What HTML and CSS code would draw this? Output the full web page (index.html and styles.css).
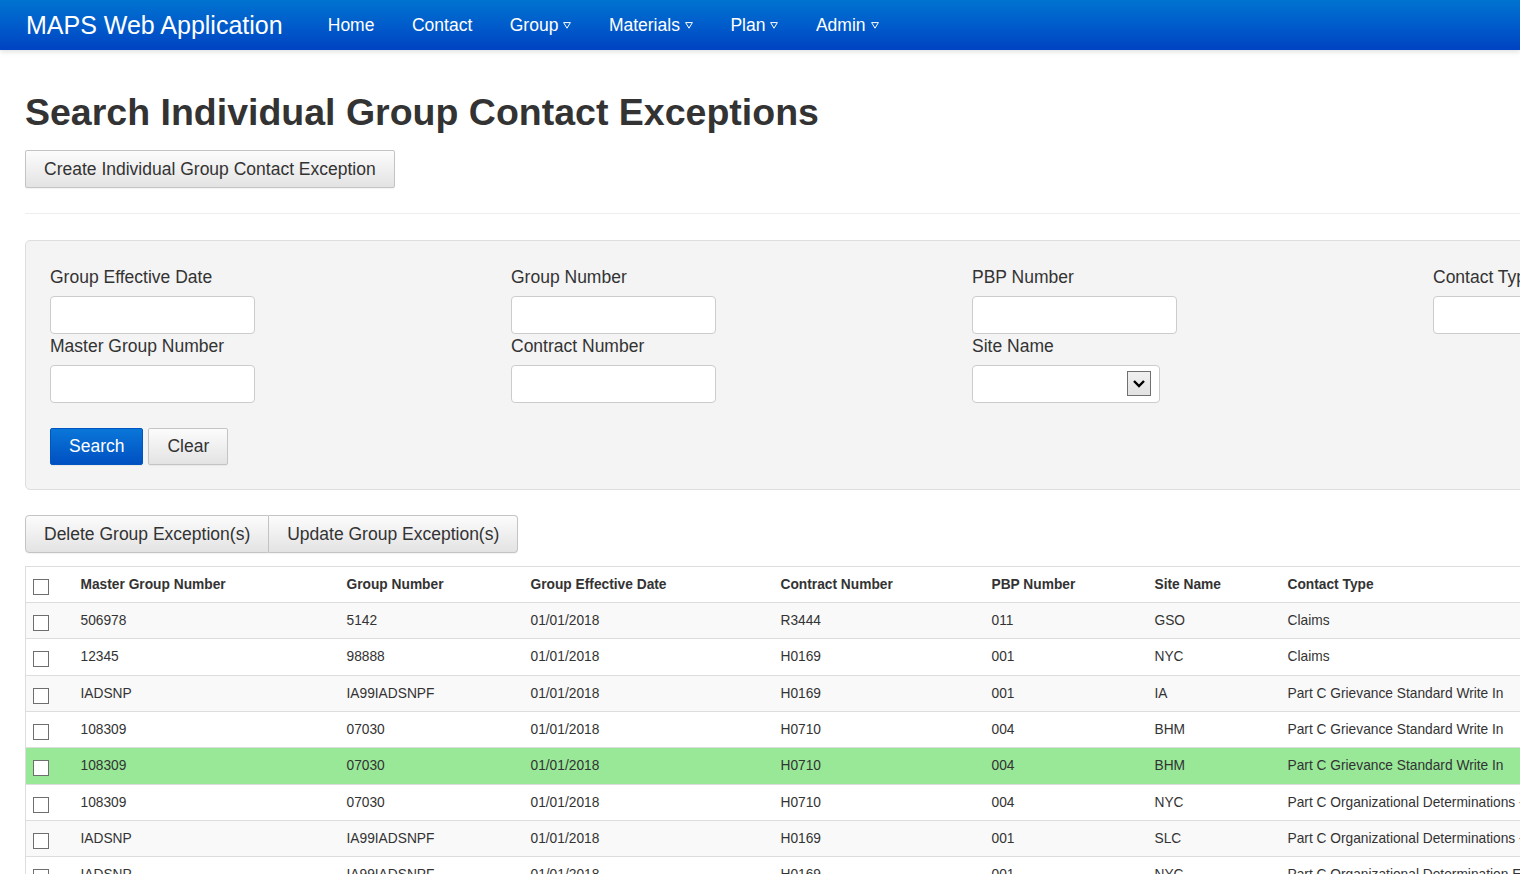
FILE: index.html
```html
<!DOCTYPE html>
<html lang="en">
<head>
<meta charset="utf-8">
<title>MAPS Web Application</title>
<link rel="stylesheet" href="styles.css">
</head>
<body>
<nav class="navbar">
  <a class="brand" href="#">MAPS Web Application</a>
  <ul class="nav">
    <li><a href="#">Home</a></li>
    <li><a href="#">Contact</a></li>
    <li><a href="#">Group<svg class="caret" width="8" height="7" viewBox="0 0 8 7"><polygon points="0.6,0.6 7.4,0.6 4,6.2" fill="none" stroke="#fff" stroke-width="1"/></svg></a></li>
    <li><a href="#">Materials<svg class="caret" width="8" height="7" viewBox="0 0 8 7"><polygon points="0.6,0.6 7.4,0.6 4,6.2" fill="none" stroke="#fff" stroke-width="1"/></svg></a></li>
    <li><a href="#">Plan<svg class="caret" width="8" height="7" viewBox="0 0 8 7"><polygon points="0.6,0.6 7.4,0.6 4,6.2" fill="none" stroke="#fff" stroke-width="1"/></svg></a></li>
    <li><a href="#">Admin<svg class="caret" width="8" height="7" viewBox="0 0 8 7"><polygon points="0.6,0.6 7.4,0.6 4,6.2" fill="none" stroke="#fff" stroke-width="1"/></svg></a></li>
  </ul>
</nav>

<main class="page">
  <h1 class="title">Search Individual Group Contact Exceptions</h1>
  <div class="create-row"><button class="btn">Create Individual Group Contact Exception</button></div>
  <hr class="divider">

  <section class="panel">
    <div class="fields">
      <div class="col">
        <label class="lbl">Group Effective Date</label>
        <input class="inp" type="text">
        <label class="lbl">Master Group Number</label>
        <input class="inp" type="text">
      </div>
      <div class="col">
        <label class="lbl">Group Number</label>
        <input class="inp" type="text">
        <label class="lbl">Contract Number</label>
        <input class="inp" type="text">
      </div>
      <div class="col">
        <label class="lbl">PBP Number</label>
        <input class="inp" type="text">
        <label class="lbl">Site Name</label>
        <div class="select">
          <span class="select-btn"><svg width="22" height="23" viewBox="0 0 22 23"><polyline points="6,9 11,14 16,9" fill="none" stroke="#000" stroke-width="2.4"/></svg></span>
        </div>
      </div>
      <div class="col">
        <label class="lbl">Contact Type</label>
        <input class="inp" type="text">
      </div>
    </div>
    <div class="search-row">
      <button class="btn btn-primary">Search</button>
      <button class="btn">Clear</button>
    </div>
  </section>

  <div class="btn-group">
    <button class="btn">Delete Group Exception(s)</button><button class="btn">Update Group Exception(s)</button>
  </div>

  <table class="grid">
    <colgroup>
      <col class="c-chk"><col class="c-mgn"><col class="c-gn"><col class="c-date"><col class="c-con"><col class="c-pbp"><col class="c-site"><col class="c-type">
    </colgroup>
    <thead>
      <tr><th><span class="chk"></span></th><th>Master Group Number</th><th>Group Number</th><th>Group Effective Date</th><th>Contract Number</th><th>PBP Number</th><th>Site Name</th><th>Contact Type</th></tr>
    </thead>
    <tbody>
      <tr><td><span class="chk"></span></td><td>506978</td><td>5142</td><td>01/01/2018</td><td>R3444</td><td>011</td><td>GSO</td><td>Claims</td></tr>
      <tr><td><span class="chk"></span></td><td>12345</td><td>98888</td><td>01/01/2018</td><td>H0169</td><td>001</td><td>NYC</td><td>Claims</td></tr>
      <tr><td><span class="chk"></span></td><td>IADSNP</td><td>IA99IADSNPF</td><td>01/01/2018</td><td>H0169</td><td>001</td><td>IA</td><td>Part C Grievance Standard Write In</td></tr>
      <tr><td><span class="chk"></span></td><td>108309</td><td>07030</td><td>01/01/2018</td><td>H0710</td><td>004</td><td>BHM</td><td>Part C Grievance Standard Write In</td></tr>
      <tr class="selected"><td><span class="chk"></span></td><td>108309</td><td>07030</td><td>01/01/2018</td><td>H0710</td><td>004</td><td>BHM</td><td>Part C Grievance Standard Write In</td></tr>
      <tr><td><span class="chk"></span></td><td>108309</td><td>07030</td><td>01/01/2018</td><td>H0710</td><td>004</td><td>NYC</td><td>Part C Organizational Determinations - Standard</td></tr>
      <tr><td><span class="chk"></span></td><td>IADSNP</td><td>IA99IADSNPF</td><td>01/01/2018</td><td>H0169</td><td>001</td><td>SLC</td><td>Part C Organizational Determinations - Standard</td></tr>
      <tr><td><span class="chk"></span></td><td>IADSNP</td><td>IA99IADSNPF</td><td>01/01/2018</td><td>H0169</td><td>001</td><td>NYC</td><td>Part C Organizational Determination Expedited</td></tr>
      <tr><td><span class="chk"></span></td><td>IADSNP</td><td>IA99IADSNPF</td><td>01/01/2018</td><td>H0169</td><td>001</td><td>IA</td><td>Claims</td></tr>
    </tbody>
  </table>
</main>
</body>
</html>
```

FILE: styles.css
```css
* { box-sizing: border-box; }
html, body { margin: 0; padding: 0; }
body {
  overflow: hidden;
  font-family: "Liberation Sans", Arial, Helvetica, sans-serif;
  color: #333;
  background: #fff;
  font-size: 17.5px;
}

/* Navbar */
.navbar {
  display: flex;
  align-items: center;
  height: 50px;
  padding-left: 26px;
  background: linear-gradient(to bottom, #0073d0 0%, #005ccb 50%, #0043c2 100%);
  box-shadow: 0 2px 5px rgba(0,0,0,0.12);
  width: 100%;
}
.brand {
  display: block;
  width: 283px;
  color: #fff;
  text-decoration: none;
  font-size: 25px;
  line-height: 50px;
  white-space: nowrap;
}
.nav {
  display: flex;
  list-style: none;
  margin: 0;
  padding: 0;
}
.nav a {
  display: flex;
  align-items: center;
  padding: 0 18.75px;
  line-height: 50px;
  color: #fff;
  text-decoration: none;
  font-size: 17.5px;
  white-space: nowrap;
}
.caret { margin-left: 5px; margin-top: 1px; }

/* Page */
.page {
  width: 1960px;
  padding: 0 25px;
}
.title {
  margin: 42px 0 0;
  font-size: 37.5px;
  line-height: 41.25px;
  font-weight: bold;
  color: #333;
  white-space: nowrap;
}
.create-row { margin-top: 16.5px; }

.btn {
  display: inline-block;
  font-family: "Liberation Sans", Arial, Helvetica, sans-serif;
  font-size: 17.5px;
  line-height: 24px;
  padding: 6px 18px;
  border: 1px solid #c4c4c4;
  border-radius: 2px;
  background: linear-gradient(to bottom, #fcfcfc 0%, #e3e3e3 100%);
  color: #333;
  white-space: nowrap;
  cursor: pointer;
  box-shadow: 0 1px 1px rgba(0,0,0,0.05);
}
.btn-primary {
  color: #fff;
  border-color: #0055c0;
  background: linear-gradient(to bottom, #0a76d8 0%, #0050c2 100%);
}

.divider {
  margin: 25px 0 26px;
  border: 0;
  border-top: 1px solid #eee;
  height: 0;
}

/* Search panel */
.panel {
  background: #f4f4f4;
  border: 1px solid #dedede;
  border-radius: 5px;
  padding: 24px 24px 24px;
  width: 1900px;
}
.fields {
  display: grid;
  grid-template-columns: repeat(4, 461px);
}
.col { display: flex; flex-direction: column; align-items: flex-start; }
.lbl {
  display: block;
  line-height: 24px;
  margin-bottom: 7px;
  white-space: nowrap;
}
.inp {
  display: block;
  width: 205px;
  height: 38px;
  margin: 0;
  border: 1px solid #ccc;
  border-radius: 4px;
  background: #fff;
  font-size: 17.5px;
}
.select {
  display: flex;
  justify-content: flex-end;
  align-items: flex-start;
  width: 188px;
  height: 38px;
  border: 1px solid #ccc;
  border-radius: 4px;
  background: #fff;
  padding: 5px 8px 0 0;
}
.select-btn {
  display: block;
  width: 24px;
  height: 25px;
  border: 1px solid #707070;
  background: linear-gradient(to bottom, #f0f0f0, #e2e2e2);
}
.select-btn svg { display: block; }

.search-row {
  display: flex;
  gap: 5px;
  margin-top: 25px;
}
.search-row .btn { line-height: 23px; }

/* Action buttons */
.btn-group {
  display: flex;
  margin-top: 25px;
}
.btn-group .btn { border-radius: 0; }
.btn-group .btn:first-child { border-radius: 4px 0 0 4px; }
.btn-group .btn:last-child { border-radius: 0 4px 4px 0; border-left: 0; }

/* Table */
.grid {
  margin-top: 13px;
  border-collapse: collapse;
  table-layout: fixed;
  width: 1700px;
  font-size: 13.75px;
  border-left: 1px solid #ddd;
  border-top: 1px solid #ddd;
}
.c-chk { width: 48px; }
.c-mgn { width: 266px; }
.c-gn { width: 184px; }
.c-date { width: 250px; }
.c-con { width: 211px; }
.c-pbp { width: 163px; }
.c-site { width: 133px; }
.c-type { width: 445px; }
.grid th, .grid td {
  text-align: left;
  padding: 8px 8px 8px 7px;
  line-height: 19.3px;
  border-bottom: 1px solid #ddd;
  white-space: nowrap;
  overflow: hidden;
  color: #333;
  vertical-align: top;
}
.grid th { font-weight: bold; background: #fff; }
.grid tbody tr:nth-child(odd) td { background: #f9f9f9; }
.grid tbody tr:nth-child(even) td { background: #fff; }
.grid tbody tr.selected td { background: #98e898; }
.chk {
  display: inline-block;
  vertical-align: top;
  width: 16px;
  height: 16px;
  margin-top: 4px;
  margin-bottom: -5px;
  border: 1px solid #6e6e6e;
  background: #fff;
}
```
